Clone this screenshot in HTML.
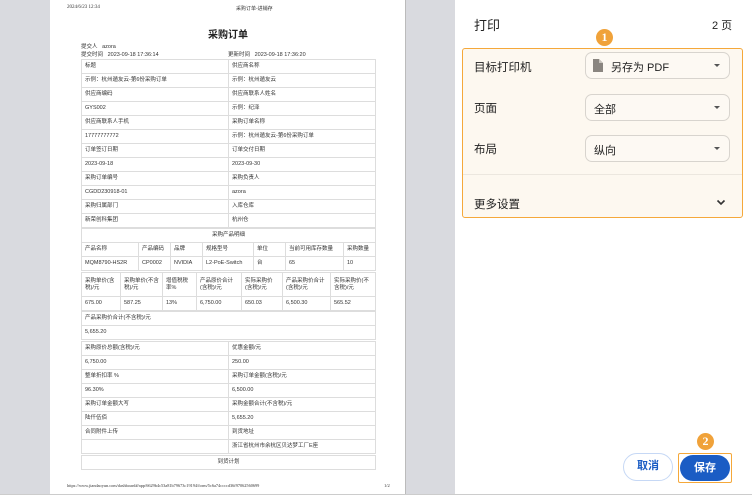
<!DOCTYPE html>
<html><head><meta charset="utf-8"><style>
*{margin:0;padding:0;box-sizing:border-box}
body{width:752px;height:500px;position:relative;background:#fff;font-family:"Liberation Sans","Noto Sans CJK SC",sans-serif;overflow:hidden}
.abs{position:absolute}
.t{position:absolute;border-collapse:collapse;table-layout:fixed;font-size:5.5px;color:#333}
.t td{border:1px solid #ddd;height:14px;padding:0 3px;vertical-align:middle;line-height:7px;overflow:hidden;white-space:nowrap}
.t td.w{white-space:normal}
.sel{position:absolute;left:585px;width:145px;height:27px;border:1px solid #d8d4ce;border-radius:7px;background:#fdf9f3;font-size:11px;color:#222}
.sel .arr{position:absolute;right:9px;top:11px;width:0;height:0;border-left:3px solid transparent;border-right:3px solid transparent;border-top:3px solid #555}
.lbl{position:absolute;left:474px;font-size:11.5px;color:#222}
.badge{position:absolute;width:17px;height:17px;border-radius:50%;background:#f0a23a;color:#fff;font-size:12px;font-weight:bold;text-align:center;line-height:17px;font-family:"Liberation Serif",serif}
</style></head><body>
<div class="abs" style="left:0;top:0;width:50px;height:494px;background:#d9dadf"></div>
<div class="abs" style="left:405px;top:0;width:50px;height:494px;background:#d9dadf;border-left:1px solid #bbb"></div>
<div class="abs" style="left:0;top:494px;width:752px;height:6px;background:#fff;border-top:1px solid #ccc"></div>
<div class="abs" style="left:67px;top:5px;font-size:5px;font-family:'Liberation Serif','Noto Serif CJK SC',serif;color:#333">2024/6/23 12:34</div>
<div class="abs" style="left:236px;top:5px;font-size:5px;color:#333">采购订单-进销存</div>
<div class="abs" style="left:0;width:456px;top:26px;text-align:center;font-size:10px;font-weight:bold;color:#222">采购订单</div>
<div class="abs" style="left:81px;top:42px;font-size:5.5px;color:#333">提交人&nbsp;&nbsp; azora</div>
<div class="abs" style="left:81px;top:50px;font-size:5.5px;color:#333">提交时间&nbsp;&nbsp; 2023-09-18 17:36:14</div>
<div class="abs" style="left:228px;top:50px;font-size:5.5px;color:#333">更新时间&nbsp;&nbsp; 2023-09-18 17:36:20</div>

<table class="t" style="left:81px;top:59px;width:295px">
<col style="width:147px"><col>
<tr><td>标题</td><td>供应商名称</td></tr>
<tr><td>示例：杭州遁友云-第6份采购订单</td><td>示例：杭州遁友云</td></tr>
<tr><td>供应商编码</td><td>供应商联系人姓名</td></tr>
<tr><td>GYS002</td><td>示例：纪泽</td></tr>
<tr><td>供应商联系人手机</td><td>采购订单名称</td></tr>
<tr><td>17777777772</td><td>示例：杭州遁友云-第6份采购订单</td></tr>
<tr><td>订单签订日期</td><td>订单交付日期</td></tr>
<tr><td>2023-09-18</td><td>2023-09-30</td></tr>
<tr><td>采购订单编号</td><td>采购负责人</td></tr>
<tr><td>CGDD230918-01</td><td>azora</td></tr>
<tr><td>采购归属部门</td><td>入库仓库</td></tr>
<tr><td>新荣创科集团</td><td>杭州仓</td></tr>
</table>

<table class="t" style="left:81px;top:228px;width:295px">
<col style="width:57px"><col style="width:32px"><col style="width:32px"><col style="width:51px"><col style="width:32px"><col style="width:58px"><col>
<tr><td colspan="7" style="text-align:center">采购产品明细</td></tr>
<tr><td>产品名称</td><td>产品编码</td><td>品牌</td><td>规格型号</td><td>单位</td><td>当前可用库存数量</td><td>采购数量</td></tr>
<tr><td>MQM8790-HS2R</td><td>CP0002</td><td>NVIDIA</td><td>L2-PoE-Switch</td><td>台</td><td>65</td><td>10</td></tr>
</table>

<table class="t" style="left:81px;top:272px;width:295px">
<col style="width:39px"><col style="width:42px"><col style="width:34px"><col style="width:45px"><col style="width:41px"><col style="width:48px"><col>
<tr><td class="w" style="height:24px">采购单价(含税)/元</td><td class="w">采购单价(不含税)/元</td><td class="w">增值税税率%</td><td class="w">产品原价合计(含税)/元</td><td class="w">实际采购价(含税)/元</td><td class="w">产品采购价合计(含税)/元</td><td class="w">实际采购价(不含税)/元</td></tr>
<tr><td>675.00</td><td>587.25</td><td>13%</td><td>6,750.00</td><td>650.03</td><td>6,500.30</td><td>565.52</td></tr>
</table>

<table class="t" style="left:81px;top:311px;width:295px">
<tr><td>产品采购价合计(不含税)/元</td></tr>
<tr><td>5,655.20</td></tr>
</table>

<table class="t" style="left:81px;top:341px;width:295px">
<col style="width:147px"><col>
<tr><td>采购原价总额(含税)/元</td><td>优惠金额/元</td></tr>
<tr><td>6,750.00</td><td>250.00</td></tr>
<tr><td>整单折扣率 %</td><td>采购订单金额(含税)/元</td></tr>
<tr><td>96.30%</td><td>6,500.00</td></tr>
<tr><td>采购订单金额大写</td><td>采购金额合计(不含税)/元</td></tr>
<tr><td>陆仟伍佰</td><td>5,655.20</td></tr>
<tr><td>合同附件上传</td><td>到货地址</td></tr>
<tr><td></td><td>浙江省杭州市余杭区贝达梦工厂E座</td></tr>
</table>
<table class="t" style="left:81px;top:455px;width:295px">
<tr><td style="text-align:center">到货计划</td></tr>
</table>
<div class="abs" style="left:67px;top:483px;font-size:4.3px;font-family:'Liberation Serif',serif;color:#333">https://www.jiandaoyun.com/dashboard#/app/6629b4c53a81b79673c19194/form/5c6a74ccccd36f97062560699</div>
<div class="abs" style="left:384px;top:483px;font-size:4.5px;font-family:'Liberation Serif',serif;color:#333">1/2</div>

<div class="abs" style="left:474px;top:15px;font-size:13px;color:#222">打印</div>
<div class="abs" style="left:712px;top:17px;font-size:11px;color:#222">2 页</div>
<div class="abs" style="left:462px;top:48px;width:281px;height:170px;border:1.5px solid #f5a83a;border-radius:3px;background:#fdf8f0"></div>
<div class="abs" style="left:463px;top:174px;width:279px;height:1px;background:#ece7df"></div>
<div class="badge" style="left:596px;top:29px">1</div>
<div class="lbl" style="top:59px">目标打印机</div>
<div class="sel" style="top:52px"><svg class="abs" style="left:7px;top:6px" width="10" height="13" viewBox="0 0 10 13"><path d="M0 0H6L10 4V13H0Z" fill="#8a8580"/><path d="M6 0V4H10" fill="#c8c3bd"/></svg><span class="abs" style="left:25px;top:6px">另存为 PDF</span><span class="arr"></span></div>
<div class="lbl" style="top:100px">页面</div>
<div class="sel" style="top:94px"><span class="abs" style="left:8px;top:6px">全部</span><span class="arr"></span></div>
<div class="lbl" style="top:141px">布局</div>
<div class="sel" style="top:135px"><span class="abs" style="left:8px;top:6px">纵向</span><span class="arr"></span></div>
<div class="lbl" style="top:196px">更多设置</div>
<svg class="abs" style="left:716px;top:199px" width="10" height="7" viewBox="0 0 10 7"><path d="M1.5 1.5L5 5L8.5 1.5" fill="none" stroke="#333" stroke-width="1.6"/></svg>

<div class="abs" style="left:623px;top:453px;width:50px;height:28px;border:1.5px solid #c6d8f5;border-radius:14px;text-align:center;line-height:25px;font-size:11px;color:#1a5cc4;font-weight:bold">取消</div>
<div class="abs" style="left:678px;top:453px;width:54px;height:30px;border:1.5px solid #f5a83a;border-radius:2px"></div>
<div class="abs" style="left:680px;top:455px;width:50px;height:26px;background:#1a5cc4;border-radius:13px;text-align:center;line-height:26px;font-size:11px;color:#fff;font-weight:bold">保存</div>
<div class="badge" style="left:697px;top:433px">2</div>
</body></html>
